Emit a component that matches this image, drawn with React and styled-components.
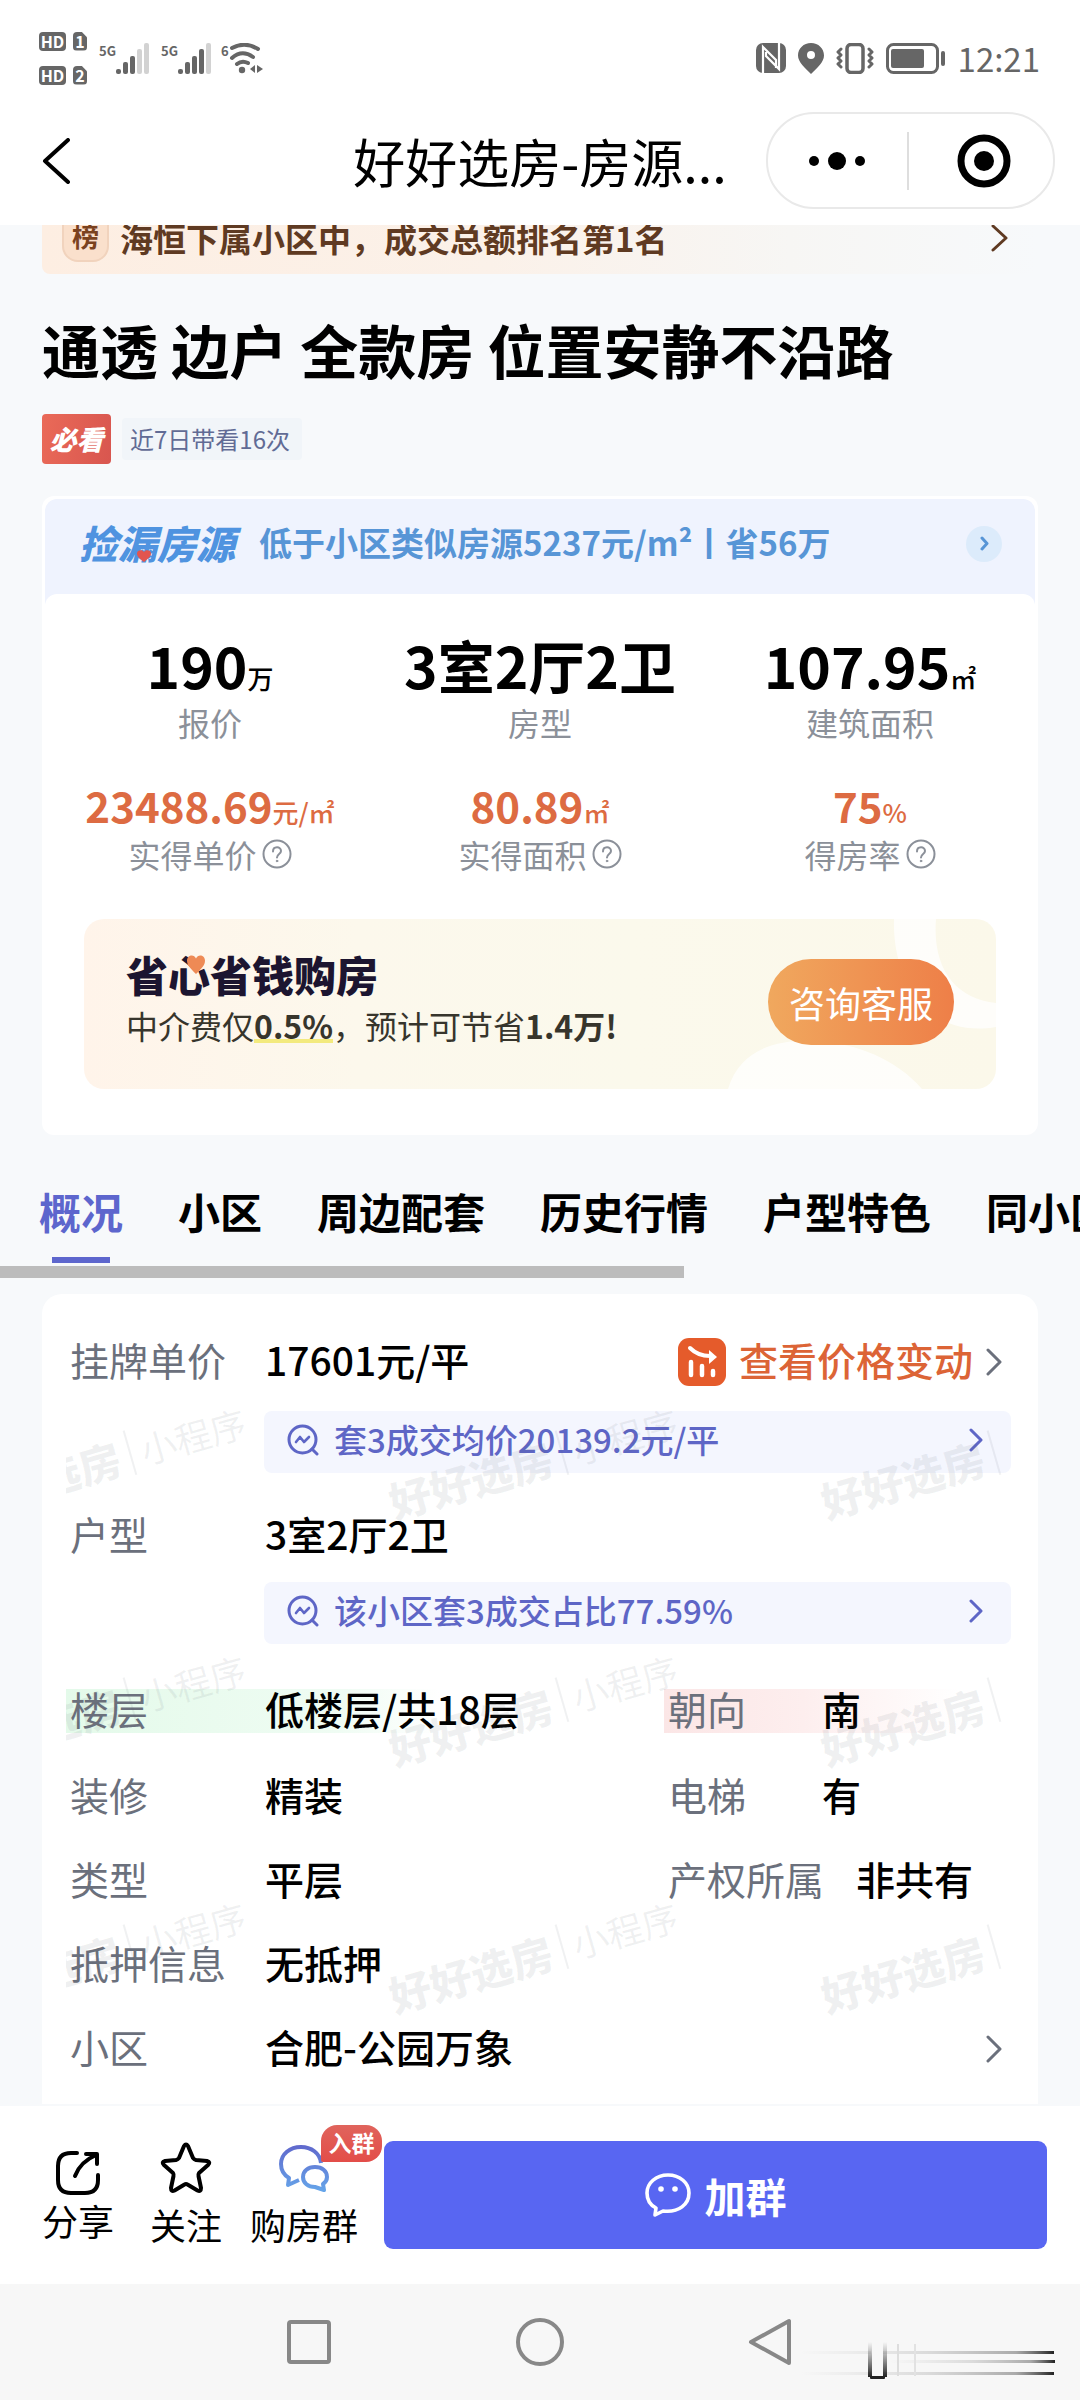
import React from "react";
import styled, { createGlobalStyle, css } from "styled-components";

const Global = createGlobalStyle`
  *, *::before, *::after { box-sizing: border-box; }
  body {
    margin: 0;
    background: #f7f9fb;
    font-family: "Noto Sans CJK SC", "Noto Sans", sans-serif;
    color: #000;
  }
  button { font: inherit; color: inherit; background: none; border: 0; padding: 0; cursor: pointer; }
  a { color: inherit; text-decoration: none; }
  h1, h2, p, dl, dd, dt { margin: 0; font-weight: inherit; }
  svg { display: block; flex: none; }
`;

const Page = styled.div`
  display: flex;
  flex-direction: column;
  min-height: 100vh;
`;

/* ---------- header ---------- */

const Header = styled.header`
  position: relative;
  z-index: 2;
  background: #fff;
  padding-bottom: 16px;
`;

const StatusBar = styled.div`
  display: flex;
  justify-content: space-between;
  align-items: center;
  height: 112px;
  padding: 4px 40px 0 39px;
  color: #666;
`;

const StatusGroup = styled.div`
  display: flex;
  align-items: center;
  gap: ${(p) => p.$gap}px;
`;

const SimColumn = styled.div`
  display: grid;
  gap: 15px;
  margin-right: 12px;
`;

const SimRow = styled.div`
  display: flex;
  gap: 7px;
`;

const SimBox = styled.span`
  width: ${(p) => (p.$slot ? 14 : 27)}px;
  height: 19px;
  border-radius: 4px;
  background: #666;
  color: #fff;
  font-size: 16px;
  font-weight: 700;
  line-height: 18px;
  text-align: center;
  ${(p) => p.$slot && css`clip-path: polygon(0 0, 60% 0, 100% 30%, 100% 100%, 0 100%);`}
`;

const Signal = styled.div`
  display: flex;
  align-items: flex-start;
  margin-right: ${(p) => p.$after || 0}px;
  font-size: 13px;
  font-weight: 700;
  line-height: 16px;
`;

const Clock = styled.time`
  font-size: 33px;
  line-height: 36px;
`;

const NavBar = styled.div`
  display: grid;
  grid-template-columns: 1fr auto 1fr;
  align-items: center;
  padding: 0 25px 0 42px;
`;

const BackButton = styled.button`
  justify-self: start;
`;

const NavTitle = styled.h2`
  font-size: 52px;
  line-height: 60px;
  margin-right: 17px;
`;

const Capsule = styled.div`
  justify-self: end;
  display: flex;
  align-items: center;
  width: 289px;
  height: 97px;
  border: 2px solid #e9e9e9;
  border-radius: 48px;
`;

const CapsuleButton = styled.button`
  flex: 1;
  display: flex;
  justify-content: center;
  & + & { border-left: 2px solid #dedede; padding: 2px 0 2px 6px; }
`;

/* ---------- top section ---------- */

const Main = styled.main`
  flex: 1;
  display: flex;
  flex-direction: column;
`;

const Intro = styled.section`
  padding: 0 42px;
`;

const RankLink = styled.a`
  display: flex;
  align-items: center;
  margin-top: -20px;
  height: 69px;
  padding: 0 30px 4px 20px;
  border-radius: 8px;
  background: linear-gradient(90deg, #fdeee2 0%, #fbf1e9 45%, #f7f6f4 75%, #f7f9fb 100%);
  color: #5f3a22;
  font-size: 33px;
  font-weight: 700;
  line-height: 40px;
`;

const RankBadge = styled.span`
  width: 47px;
  height: 48px;
  margin-right: 11px;
  border-radius: 8px 8px 16px 16px;
  border: 2px solid #f1d3bd;
  background: #fae0cc;
  color: #7a421f;
  font-size: 27px;
  font-weight: 700;
  line-height: 40px;
  text-align: center;
`;

const Grow = styled.span`
  flex: 1;
`;

const Title = styled.h1`
  margin-top: 39px;
  font-size: 58px;
  font-weight: 700;
  line-height: 72px;
`;

const Tags = styled.div`
  display: flex;
  align-items: center;
  gap: 11px;
  margin-top: 29px;
`;

const MustSee = styled.span`
  width: 69px;
  height: 50px;
  border-radius: 4px;
  background: linear-gradient(100deg, #ea6a58, #d8564f);
  color: #fff;
  font-size: 27px;
  font-weight: 900;
  font-style: italic;
  line-height: 50px;
  text-align: center;
`;

const Visits = styled.span`
  padding: 0 12px 0 8px;
  border-radius: 4px;
  background: #f1f5f9;
  color: #616b95;
  font-size: 24px;
  line-height: 42px;
`;

/* ---------- price card ---------- */

const PriceCard = styled.section`
  margin: 32px 42px 0;
  padding: 3px;
  border-radius: 12px;
  background: #fff;
`;

const Bargain = styled.a`
  display: flex;
  align-items: center;
  height: 107px;
  padding: 0 33px 18px 34px;
  border-radius: 12px 12px 0 0;
  background: #eff3fe;
  color: #5795d6;
`;

const BargainMark = styled.strong`
  position: relative;
  margin-right: 24px;
  font-size: 39px;
  font-weight: 900;
  font-style: italic;
  line-height: 44px;
  padding-bottom: 4px;
  color: #4f93e0;
`;

const MarkHeart = styled.svg`
  position: absolute;
  left: 58px;
  bottom: 6px;
`;

const BargainText = styled.span`
  flex: 1;
  font-size: 33px;
  font-weight: 700;
  line-height: 40px;
  padding-bottom: 4px;
`;

const RoundArrow = styled.span`
  display: grid;
  place-items: center;
  width: 36px;
  height: 36px;
  border-radius: 50%;
  background: #dcebfb;
`;

const CardBody = styled.div`
  position: relative;
  margin-top: -12px;
  padding: 32px 0 43px;
  border-radius: 12px;
  background: #fff;
`;

const Stats = styled.dl`
  display: grid;
  grid-template-columns: repeat(3, 1fr);
  row-gap: 34px;
`;

const Stat = styled.div`
  display: flex;
  flex-direction: column-reverse;
  align-items: center;
`;

const StatValue = styled.dd`
  display: flex;
  align-items: baseline;
  font-size: ${(p) => (p.$accent ? 42 : 57)}px;
  line-height: ${(p) => (p.$accent ? 58 : 76)}px;
  font-weight: 700;
  color: ${(p) => (p.$accent ? "#dd6b42" : "#000")};
`;

const Unit = styled.small`
  font-size: 26px;
  font-weight: 500;
  line-height: 30px;
`;

const StatLabel = styled.dt`
  display: flex;
  align-items: center;
  gap: 5px;
  font-size: 32px;
  line-height: 40px;
  color: #8b9099;
`;

const Promo = styled.div`
  position: relative;
  display: flex;
  align-items: center;
  justify-content: space-between;
  height: 170px;
  margin: 45px 39px 0;
  padding: 0 42px 10px;
  border-radius: 20px;
  overflow: hidden;
  background: linear-gradient(90deg, #fff4ea 0%, #fcf8ec 30%, #fbf9ec 60%, #fbf8ea 100%);
`;

const PromoArt = styled.svg`
  position: absolute;
  right: 0;
  top: 0;
`;

const PromoTitle = styled.h2`
  position: relative;
  width: max-content;
  margin-bottom: 2px;
  font-size: 42px;
  font-weight: 900;
  line-height: 50px;
  color: #1c1530;
`;

const PromoHeart = styled.svg`
  position: absolute;
  left: 61px;
  top: 6px;
`;

const PromoText = styled.p`
  font-size: 32px;
  line-height: 48px;
  color: #37352c;
  b { font-weight: 700; }
`;

const Marked = styled.b`
  background: linear-gradient(#f3ea7e, #f3ea7e) 0 88% / 100% 4px no-repeat;
`;

const Consult = styled.button`
  position: relative;
  height: 86px;
  margin-top: 6px;
  padding: 0 21px;
  border-radius: 43px;
  background: linear-gradient(90deg, #f0a85e, #ee7f48);
  color: #fff;
  font-size: 36px;
  line-height: 84px;
`;

/* ---------- tabs ---------- */

const Tabs = styled.nav`
  display: flex;
  gap: 55px;
  margin-top: 46px;
  padding-left: 39px;
  overflow: hidden;
  white-space: nowrap;
`;

const Tab = styled.a`
  display: flex;
  flex-direction: column;
  align-items: center;
  gap: 16px;
  font-size: 42px;
  font-weight: 700;
  line-height: 60px;
  color: ${(p) => (p.$active ? "#5d66cd" : "#000")};
  &::after {
    content: "";
    width: 58px;
    height: 6px;
    background: ${(p) => (p.$active ? "#5d66cd" : "transparent")};
  }
`;

const ScrollTrack = styled.div`
  margin-top: 3px;
  height: 12px;
  &::before {
    content: "";
    display: block;
    width: 63.3%;
    height: 100%;
    background: #bcbcbc;
  }
`;

/* ---------- details ---------- */

const DetailCard = styled.section`
  position: relative;
  flex: 1;
  margin: 16px 42px 2px;
  padding: 40px 27px 24px 28px;
  border-radius: 20px 20px 0 0;
  background: #fff;
`;

const Row = styled.div`
  display: grid;
  grid-template-columns: 195px 1fr auto;
  align-items: center;
  min-height: 56px;
  margin-bottom: ${(p) => p.$gap}px;
  font-size: 39px;
`;

const PairRow = styled.div`
  display: grid;
  grid-template-columns: 598fr 343fr;
  margin-bottom: ${(p) => p.$gap}px;
  font-size: 39px;
`;

const Pair = styled.div`
  display: flex;
`;

const tints = {
  green: "linear-gradient(90deg, #e4faea, #effcf3 45%, rgba(255,255,255,0) 62%)",
  red: "linear-gradient(90deg, #fbe6e6, #fdeeee 40%, rgba(255,255,255,0) 85%)",
};

const cellText = css`
  line-height: 50px;
  padding-bottom: 6px;
`;

const Label = styled.dt`
  ${cellText}
  min-width: ${(p) => p.$min || 0}px;
  margin-right: ${(p) => p.$after || 0}px;
  color: #6b707c;
`;

const Value = styled.dd`
  ${cellText}
  font-weight: 500;
`;

const TintedPair = styled(Pair)`
  background: ${(p) => tints[p.$tint]} 0 50% / 100% 44px no-repeat;
  margin-left: -4px;
  padding-left: 4px;
`;

const PriceLink = styled.a`
  display: flex;
  align-items: center;
  gap: 13px;
  padding-right: 9px;
  color: #dc6436;
  font-weight: 500;
`;

const LinkText = styled.span`
  ${cellText}
`;

const Insight = styled.a`
  display: flex;
  align-items: center;
  gap: 15px;
  height: 62px;
  margin: 0 0 ${(p) => p.$gap}px 194px;
  padding: 0 28px 4px 23px;
  border-radius: 8px;
  background: #f4f6fe;
  color: #5e66c6;
  font-size: 33px;
  font-weight: 500;
  line-height: 40px;
`;

const InsightText = styled(Grow)`
  padding-bottom: 2px;
`;

const ArrowCell = styled.span`
  padding-right: 9px;
`;

const Watermarks = styled.div`
  position: absolute;
  inset: 43px 34px 0 24px;
  overflow: hidden;
  pointer-events: none;
`;

const WatermarkGrid = styled.div`
  display: grid;
  grid-template-columns: repeat(3, 432px);
  grid-auto-rows: 247px;
  margin-left: -181px;
`;

const Watermark = styled.span`
  display: flex;
  align-items: center;
  justify-content: center;
  gap: 10px;
  white-space: nowrap;
  transform: rotate(-16deg);
  color: rgba(90, 100, 110, 0.09);
  font-size: 36px;
  b { font-size: 42px; font-weight: 900; }
  i { width: 2px; height: 46px; background: currentColor; }
`;

/* ---------- footer ---------- */

const ActionBar = styled.footer`
  display: flex;
  align-items: flex-start;
  height: 178px;
  padding: 35px 33px 0 42px;
  background: #fff;
`;

const Action = styled.button`
  position: relative;
  display: flex;
  flex-direction: column;
  align-items: center;
  margin-right: ${(p) => p.$after}px;
  padding-top: ${(p) => (p.$tight ? 9 : 0)}px;
  gap: ${(p) => (p.$tight ? 2 : 7)}px;
  font-size: 36px;
  line-height: 44px;
`;

const ActionIcon = styled.span`
  display: grid;
  place-items: center;
  height: ${(p) => (p.$small ? 46 : 54)}px;
`;

const Ribbon = styled.em`
  position: absolute;
  top: -16px;
  left: 71px;
  width: 61px;
  height: 37px;
  border-radius: 16px 16px 16px 2px;
  background: linear-gradient(180deg, #e0645c, #e34d49);
  color: #fff;
  font-size: 23px;
  font-style: normal;
  font-weight: 700;
  line-height: 34px;
`;

const Join = styled.button`
  flex: 1;
  display: flex;
  align-items: center;
  justify-content: center;
  gap: 14px;
  height: 108px;
  border-radius: 9px;
  background: #5866f2;
  color: #fff;
  font-size: 41px;
  font-weight: 700;
  line-height: 56px;
`;

const SystemNav = styled.nav`
  position: relative;
  display: flex;
  justify-content: center;
  gap: 183px;
  height: 116px;
  padding-top: 34px;
  background: #f7f7f7;
`;

const CornerArt = styled.svg`
  position: absolute;
  right: 24px;
  top: 58px;
`;

/* ---------- drawings ---------- */

const Chevron = ({ w = 16, h = 28, stroke = 3, color = "currentColor", left }) => (
  <svg width={w} height={h} viewBox={`0 0 ${w} ${h}`} fill="none" stroke={color} strokeWidth={stroke} strokeLinecap="round" strokeLinejoin="round" aria-hidden="true">
    <path d={left ? `M${w - 2} 2L3 ${h / 2}L${w - 2} ${h - 2}` : `M2 2L${w - 2} ${h / 2}L2 ${h - 2}`} />
  </svg>
);

const Bars = ({ lit }) => (
  <svg width="34" height="31" viewBox="0 0 34 31" aria-hidden="true">
    {[5, 12, 18, 25, 31].map((h, i) => (
      <rect key={h} x={i * 7} y={31 - h} width="5" height={h} rx="2" fill={i < lit ? "#666" : "#d2d2d2"} />
    ))}
  </svg>
);

const Wifi = () => (
  <svg width="34" height="31" viewBox="0 0 34 31" fill="none" stroke="#666" strokeWidth="4" strokeLinecap="round" aria-hidden="true">
    <path d="M3 5Q16-2 29 6M3 15Q13 6 24 14M8 21Q13 17 19 20" />
    <circle cx="13" cy="27" r="3.2" fill="#666" stroke="none" />
    <path d="M26 22v8l-5-4zM28 22v8l6-4z" fill="#666" stroke="none" />
  </svg>
);

const Nfc = () => (
  <svg width="30" height="30" viewBox="0 0 30 30" aria-hidden="true">
    <rect width="30" height="30" rx="7" fill="#666" />
    <path d="M7 30V4L20 17V25M23 0V26L10 13V9" fill="none" stroke="#fff" strokeWidth="2.2" />
  </svg>
);

const Pin = () => (
  <svg width="26" height="31" viewBox="0 0 26 31" aria-hidden="true">
    <path fillRule="evenodd" fill="#666" d="M13 0C5.600 0 0 5.500 0 12.500C0 19 7 25 13 31C19 25 26 19 26 12.500C26 5.500 20.400 0 13 0ZM13 8A4 4 0 1 1 13 16A4 4 0 1 1 13 8Z" />
  </svg>
);

const Vibrate = () => (
  <svg width="38" height="31" viewBox="0 0 38 31" fill="none" stroke="#666" strokeLinejoin="round" strokeLinecap="round" aria-hidden="true">
    <rect x="11" y="1.500" width="16" height="28" rx="4" strokeWidth="3.500" />
    <path d="M5 6L2 9L5 12L2 15L5 18L2 21L5 24M33 6L36 9L33 12L36 15L33 18L36 21L33 24" strokeWidth="3" />
  </svg>
);

const Battery = () => (
  <svg width="60" height="31" viewBox="0 0 60 31" aria-hidden="true">
    <rect x="1.500" y="1.500" width="50" height="28" rx="6" fill="none" stroke="#666" strokeWidth="3" />
    <rect x="5" y="6" width="33" height="19" rx="2" fill="#666" />
    <rect x="55" y="8" width="4" height="15" rx="2" fill="#666" />
  </svg>
);

const More = () => (
  <svg width="58" height="20" viewBox="0 0 58 20" aria-hidden="true">
    <circle cx="6" cy="10" r="5" /><circle cx="29" cy="10" r="9" /><circle cx="52" cy="10" r="5" />
  </svg>
);

const Target = () => (
  <svg width="54" height="54" viewBox="0 0 54 54" aria-hidden="true">
    <circle cx="27" cy="27" r="23" fill="none" stroke="#000" strokeWidth="7" /><circle cx="27" cy="27" r="10" />
  </svg>
);

const Help = () => (
  <svg width="30" height="30" viewBox="0 0 30 30" fill="none" stroke="#8b9099" strokeWidth="2" strokeLinecap="round" aria-hidden="true">
    <circle cx="15" cy="15" r="13.500" />
    <path d="M11 12.500C11 7 19 7 19 12C19 15 15 15 15 18.500" />
    <circle cx="15" cy="22" r="0.800" fill="#8b9099" strokeWidth="1" />
  </svg>
);

const HeartPath = "M9 19C3 13 0 10 0 5.500C0 0 7-1.500 9 3.500C11-1.500 18 0 18 5.500C18 10 15 13 9 19Z";

const PriceDrop = () => (
  <svg width="48" height="48" viewBox="0 0 48 48" fill="none" stroke="#fff" strokeLinecap="round" aria-hidden="true">
    <rect width="48" height="48" rx="11" fill="#e55b2b" stroke="none" />
    <path d="M12 10Q20 18 32 18" strokeWidth="4" />
    <path d="M31 12L39 19L31 26Z" fill="#fff" stroke="none" />
    <path d="M13 24V37M24 28V37M35 33V37" strokeWidth="4.500" />
  </svg>
);

const Analyse = () => (
  <svg width="32" height="32" viewBox="0 0 32 32" fill="none" stroke="#5e66c6" strokeWidth="3" strokeLinecap="round" strokeLinejoin="round" aria-hidden="true">
    <circle cx="15.500" cy="15.500" r="13.500" />
    <path d="M25 25L30 30" />
    <path d="M9 18L13 13L17 18L22 13" strokeWidth="2.600" />
  </svg>
);

const Share = () => (
  <svg width="46" height="46" viewBox="0 0 46 46" fill="none" stroke="#000" strokeWidth="4" strokeLinecap="round" strokeLinejoin="round" aria-hidden="true">
    <path d="M22 3H16Q3 3 3 16V30Q3 43 16 43H30Q43 43 43 30V25" />
    <path d="M20 26Q25 12 41 5M31 4H42V14" />
  </svg>
);

const Star = () => (
  <svg width="52" height="52" viewBox="0 0 52 52" fill="none" stroke="#000" strokeWidth="4" strokeLinejoin="round" aria-hidden="true">
    <path d="M24 4Q26 1 28 4L33 16Q34 17.500 36 18L47 19Q51 20 48 23L39 31Q38 32.500 38.500 34L41 46Q41 50 37.500 48.500L27.500 42.500Q26 41.500 24.500 42.500L14.500 48.500Q11 50 11 46L13.500 34Q14 32.500 13 31L4 23Q1 20 5 19L16 18Q18 17.500 19 16Z" />
  </svg>
);

const Chats = () => (
  <svg width="50" height="47" viewBox="0 0 50 47" fill="none" strokeWidth="4" strokeLinejoin="round" stroke="url(#chatShade)" aria-hidden="true">
    <defs>
      <linearGradient id="chatShade" x1="0" y1="0" x2="0" y2="47" gradientUnits="userSpaceOnUse">
        <stop offset="0" stopColor="#6068cc" /><stop offset="1" stopColor="#66a6ea" />
      </linearGradient>
    </defs>
    <path d="M42 18C41 8 32 2 22 2C11 2 2 9 2 19C2 26 5 30 10 33L9 40L20 35" />
    <path d="M36 22C29 22 24 26 24 32C24 38 29 42 36 42L45 45L44 39C47 37 48 35 48 32C48 26 43 22 36 22Z" />
  </svg>
);

const Face = () => (
  <svg width="46" height="44" viewBox="0 0 46 44" fill="none" stroke="#fff" strokeWidth="3.600" strokeLinejoin="round" aria-hidden="true">
    <path d="M23 2C11 2 2 10 2 20C2 27 5 32 11 35L10 42L18 38C34 40 44 31 44 20C44 10 35 2 23 2Z" />
    <circle cx="16" cy="16" r="2.800" fill="#fff" stroke="none" /><circle cx="30" cy="16" r="2.800" fill="#fff" stroke="none" />
  </svg>
);

const Streaks = () => (
  <CornerArt width="256" height="40" viewBox="0 0 256 40" aria-hidden="true">
    <defs>
      <linearGradient id="fadeRight" x1="0" x2="1">
        <stop offset="0" stopColor="#aaa" stopOpacity="0" />
        <stop offset="0.500" stopColor="#999" stopOpacity="0.300" />
        <stop offset="0.850" stopColor="#777" stopOpacity="0.600" />
        <stop offset="1" stopColor="#222" />
      </linearGradient>
      <linearGradient id="fadeDown" x1="0" y1="0" x2="0" y2="1">
        <stop offset="0" stopColor="#444" stopOpacity="0" /><stop offset="1" stopColor="#222" />
      </linearGradient>
    </defs>
    <rect x="0" y="9" width="254" height="3" fill="url(#fadeRight)" />
    <rect x="90" y="18" width="165" height="3" fill="url(#fadeRight)" />
    <rect x="0" y="30" width="254" height="3" fill="url(#fadeRight)" />
    <rect x="71" y="0" width="12" height="34" fill="#f7f7f7" />
    <rect x="68" y="0" width="4" height="35" fill="url(#fadeDown)" />
    <rect x="83" y="0" width="4" height="35" fill="url(#fadeDown)" />
    <rect x="70" y="34" width="15" height="3" rx="1" fill="#222" />
    <rect x="97" y="2" width="2" height="32" fill="#ddd" />
    <rect x="114" y="2" width="2" height="32" fill="#e2e2e2" />
  </CornerArt>
);

/* ---------- data ---------- */

const STATS = [
  { value: "190", unit: "万", label: "报价" },
  { value: "3室2厅2卫", label: "房型" },
  { value: "107.95", unit: "㎡", label: "建筑面积" },
  { value: "23488.69", unit: "元/㎡", label: "实得单价", accent: true },
  { value: "80.89", unit: "㎡", label: "实得面积", accent: true },
  { value: "75", unit: "%", label: "得房率", accent: true },
];

const TABS = ["概况", "小区", "周边配套", "历史行情", "户型特色", "同小区房源"];

export default function App() {
  return (
    <Page>
      <Global />
      <Header>
        <StatusBar>
          <StatusGroup $gap={0}>
            <SimColumn>
              {["1", "2"].map((n) => (
                <SimRow key={n}><SimBox>HD</SimBox><SimBox $slot>{n}</SimBox></SimRow>
              ))}
            </SimColumn>
            <Signal $after={11}>5G<Bars lit={3} /></Signal>
            <Signal $after={9}>5G<Bars lit={4} /></Signal>
            <Signal>6<Wifi /></Signal>
          </StatusGroup>
          <StatusGroup $gap={12}>
            <Nfc /><Pin /><Vibrate /><Battery />
            <Clock>12:21</Clock>
          </StatusGroup>
        </StatusBar>
        <NavBar>
          <BackButton aria-label="返回"><Chevron w={28} h={46} stroke={4} color="#000" left /></BackButton>
          <NavTitle>好好选房-房源...</NavTitle>
          <Capsule>
            <CapsuleButton aria-label="更多"><More /></CapsuleButton>
            <CapsuleButton aria-label="关闭"><Target /></CapsuleButton>
          </Capsule>
        </NavBar>
      </Header>

      <Main>
        <Intro>
          <RankLink href="#rank">
            <RankBadge>榜</RankBadge>
            <Grow>海恒下属小区中，成交总额排名第1名</Grow>
            <Chevron w={17} h={28} />
          </RankLink>
          <Title>通透 边户 全款房 位置安静不沿路</Title>
          <Tags>
            <MustSee>必看</MustSee>
            <Visits>近7日带看16次</Visits>
          </Tags>
        </Intro>

        <PriceCard>
          <Bargain href="#bargain">
            <BargainMark>
              捡漏房源
              <MarkHeart width="14" height="12" viewBox="0 0 18 19" preserveAspectRatio="none" aria-hidden="true">
                <path d={HeartPath} fill="#e2554f" />
              </MarkHeart>
            </BargainMark>
            <BargainText>低于小区类似房源5237元/m²丨省56万</BargainText>
            <RoundArrow><Chevron w={9} h={15} /></RoundArrow>
          </Bargain>
          <CardBody>
            <Stats>
              {STATS.map((s) => (
                <Stat key={s.label}>
                  <StatLabel>{s.label}{s.accent && <Help />}</StatLabel>
                  <StatValue $accent={s.accent}>{s.value}{s.unit && <Unit>{s.unit}</Unit>}</StatValue>
                </Stat>
              ))}
            </Stats>
            <Promo>
              <PromoArt width="270" height="170" viewBox="0 0 270 170" aria-hidden="true">
                <path d="M168 0C166 60 200 120 270 108V84C230 80 206 50 210 0Z" fill="#fff" opacity="0.75" />
                <path d="M2 170C14 130 50 120 90 122C130 124 170 140 196 170Z" fill="#fff" opacity="0.75" />
              </PromoArt>
              <div>
                <PromoTitle>
                  省心省钱购房
                  <PromoHeart width="18" height="19" viewBox="0 0 18 19" aria-hidden="true">
                    <path d={HeartPath} fill="#ee8a55" />
                  </PromoHeart>
                </PromoTitle>
                <PromoText>中介费仅<Marked>0.5%</Marked>，预计可节省<b>1.4万!</b></PromoText>
              </div>
              <Consult>咨询客服</Consult>
            </Promo>
          </CardBody>
        </PriceCard>

        <Tabs>
          {TABS.map((t, i) => (
            <Tab key={t} href={`#tab-${i}`} $active={i === 0}>{t}</Tab>
          ))}
        </Tabs>
        <ScrollTrack />

        <DetailCard>
          <dl>
            <Row $gap={21}>
              <Label>挂牌单价</Label>
              <Value>17601元/平</Value>
              <PriceLink href="#price"><PriceDrop /><LinkText>查看价格变动</LinkText><Chevron color="#6b707c" /></PriceLink>
            </Row>
            <Insight href="#deals" $gap={35}><Analyse /><InsightText>套3成交均价20139.2元/平</InsightText><Chevron w={14} h={24} /></Insight>
            <Row $gap={18}>
              <Label>户型</Label>
              <Value>3室2厅2卫</Value>
            </Row>
            <Insight href="#share" $gap={39}><Analyse /><InsightText>该小区套3成交占比77.59%</InsightText><Chevron w={14} h={24} /></Insight>
            <PairRow $gap={30}>
              <TintedPair $tint="green"><Label $min={195}>楼层</Label><Value>低楼层/共18层</Value></TintedPair>
              <TintedPair $tint="red"><Label $min={154}>朝向</Label><Value>南</Value></TintedPair>
            </PairRow>
            <PairRow $gap={28}>
              <Pair><Label $min={195}>装修</Label><Value>精装</Value></Pair>
              <Pair><Label $min={154}>电梯</Label><Value>有</Value></Pair>
            </PairRow>
            <PairRow $gap={28}>
              <Pair><Label $min={195}>类型</Label><Value>平层</Value></Pair>
              <Pair><Label $min={154} $after={32}>产权所属</Label><Value>非共有</Value></Pair>
            </PairRow>
            <Row $gap={28}>
              <Label>抵押信息</Label>
              <Value>无抵押</Value>
            </Row>
            <Row $gap={0}>
              <Label>小区</Label>
              <Value>合肥-公园万象</Value>
              <ArrowCell><Chevron color="#6b707c" /></ArrowCell>
            </Row>
          </dl>
          <Watermarks aria-hidden="true">
            <WatermarkGrid>
              {Array.from({ length: 9 }, (_, i) => (
                <Watermark key={i}><b>好好选房</b><i />小程序</Watermark>
              ))}
            </WatermarkGrid>
          </Watermarks>
        </DetailCard>
      </Main>

      <ActionBar>
        <Action $after={36} $tight><ActionIcon $small><Share /></ActionIcon>分享</Action>
        <Action $after={28}><ActionIcon><Star /></ActionIcon>关注</Action>
        <Action $after={26}><ActionIcon><Chats /></ActionIcon>购房群<Ribbon>入群</Ribbon></Action>
        <Join><Face />加群</Join>
      </ActionBar>
      <SystemNav>
        <svg width="48" height="48" viewBox="0 0 48 48" fill="none" stroke="#888" strokeWidth="4"><rect x="4" y="4" width="40" height="40" rx="2" /></svg>
        <svg width="48" height="48" viewBox="0 0 48 48" fill="none" stroke="#888" strokeWidth="4"><circle cx="24" cy="24" r="22" /></svg>
        <svg width="48" height="48" viewBox="0 0 48 48" fill="none" stroke="#888" strokeWidth="4" strokeLinejoin="round"><path d="M42 3V45L4 24Z" /></svg>
        <Streaks />
      </SystemNav>
    </Page>
  );
}
